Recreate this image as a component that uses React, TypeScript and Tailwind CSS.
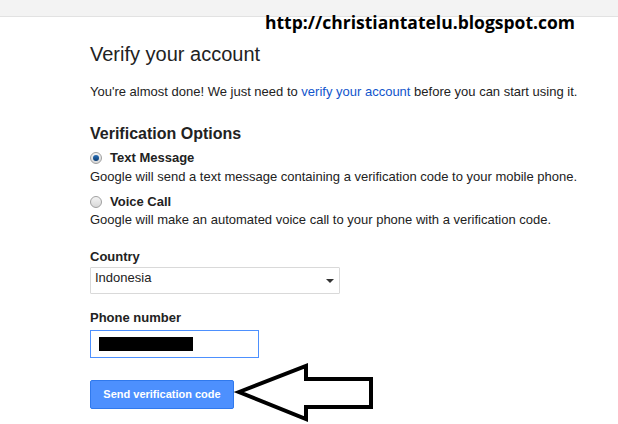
import React from "react";

function Radio({ checked }: { checked?: boolean }) {
  return (
    <span className="relative inline-block w-[12px] h-[12px] rounded-full border border-[#a0a0a0] bg-gradient-to-b from-[#f4f4f4] to-[#d8d8d8] shrink-0">
      {checked && (
        <span className="absolute left-[2px] top-[2px] w-[6px] h-[6px] rounded-full bg-gradient-to-b from-[#2a6fb6] to-[#0b3d74]" />
      )}
    </span>
  );
}

export default function App() {
  return (
    <div
      className="relative w-[618px] h-[424px] bg-white overflow-hidden text-[#222]"
      style={{ fontFamily: '"Liberation Sans", Arial, sans-serif' }}
    >
      <div className="h-[17px] bg-[#f3f3f3] border-b border-[#e2e2e2]" />
      <div className="pl-[90px]">
        <h1 className="mt-[25px] text-[20px] leading-[24px] font-normal text-[#222]">Verify your account</h1>
        <p className="mt-[18px] text-[13px] leading-[16px] text-[#222]">
          You're almost done! We just need to{" "}
          <span className="text-[#15c]">verify your account</span> before you can start using it.
        </p>
        <h2 className="mt-[24px] text-[16px] leading-[20px] font-bold text-[#222]">Verification Options</h2>
        <div className="mt-[6px] flex items-center gap-[8px] text-[13px] leading-[16px] font-bold">
          <Radio checked />
          <span>Text Message</span>
        </div>
        <p className="mt-[3px] text-[13px] leading-[16px]">
          Google will send a text message containing a verification code to your mobile phone.
        </p>
        <div className="mt-[9px] flex items-center gap-[8px] text-[13px] leading-[16px] font-bold">
          <Radio />
          <span>Voice Call</span>
        </div>
        <p className="mt-[2px] text-[13px] leading-[16px]">
          Google will make an automated voice call to your phone with a verification code.
        </p>
        <div className="mt-[21px] text-[13px] leading-[16px] font-bold">Country</div>
        <div className="mt-[2px] w-[250px] h-[27px] border border-[#d9d9d9] rounded-[1px] flex items-center justify-between pl-[4px] pr-[5px] text-[13px]">
          <span className="-mt-[6px]">Indonesia</span>
          <span className="w-0 h-0 border-l-[4px] border-r-[4px] border-t-[4px] border-l-transparent border-r-transparent border-t-[#333]" />
        </div>
        <div className="mt-[16px] text-[13px] leading-[16px] font-bold">Phone number</div>
        <div className="mt-[4px] w-[169px] h-[28px] border border-[#4d90fe] flex items-center pl-[8px]">
          <span className="block w-[94px] h-[14px] bg-black" />
        </div>
        <button className="mt-[22px] w-[144px] h-[29px] rounded-[2px] bg-[#4d90fe] border border-[#3079ed] text-white text-[11px] font-bold">
          Send verification code
        </button>
      </div>

      <div
        className="absolute left-[265px] top-[10px] text-[17.5px] leading-[24px] font-bold text-black"
        style={{ fontFamily: '"Open Sans", sans-serif' }}
      >
        http://christiantatelu.blogspot.com
      </div>

      <svg className="absolute left-0 top-0" width="618" height="424">
        <polygon
          points="239,392 306,366 306,379 371,379 371,407 306,407 306,419"
          fill="white"
          stroke="black"
          strokeWidth="4"
          strokeLinejoin="miter"
        />
      </svg>
    </div>
  );
}
